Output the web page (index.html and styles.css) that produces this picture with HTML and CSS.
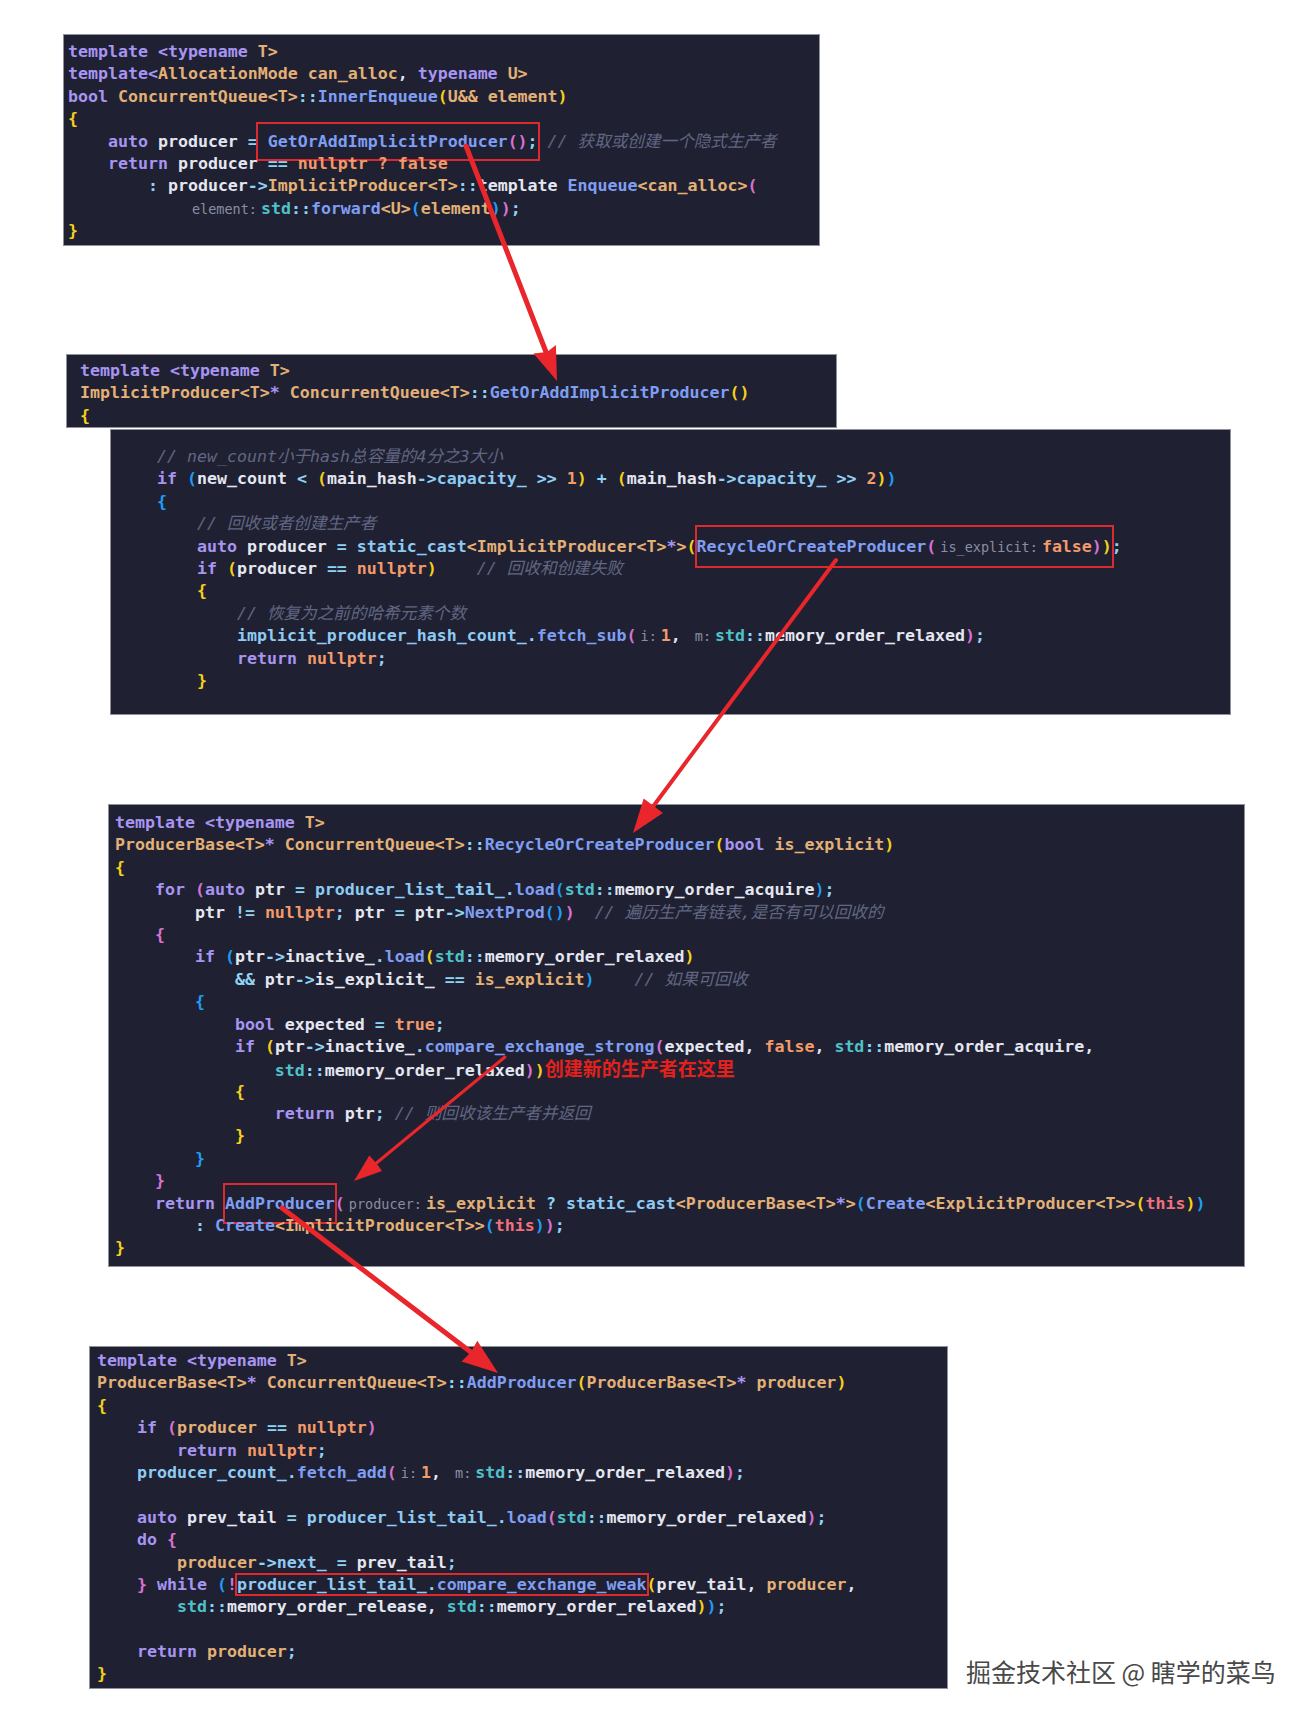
FILE: index.html
```html
<!DOCTYPE html>
<html lang="zh-CN">
<head>
<meta charset="utf-8">
<title>ConcurrentQueue</title>
<link rel="stylesheet" href="styles.css">
</head>
<body>
<div class="page">
  <div class="code b1">
<div class="l"><span class="k">template &lt;typename</span> <span class="t">T&gt;</span></div>
<div class="l"><span class="k">template&lt;</span><span class="t">AllocationMode can_alloc</span>, <span class="k">typename</span> <span class="t">U&gt;</span></div>
<div class="l"><span class="k">bool</span> <span class="t">ConcurrentQueue&lt;T&gt;</span><span class="o">::</span><span class="f">InnerEnqueue</span><span class="y">(</span><span class="t">U&amp;&amp; element</span><span class="y">)</span></div>
<div class="l"><span class="y">{</span></div>
<div class="l">    <span class="k">auto</span> producer <span class="o">=</span><span class="box bx1"> <span class="f">GetOrAddImplicitProducer</span><span class="p">()</span><span class="o">;</span></span> <span class="c">// 获取或创建一个隐式生产者</span></div>
<div class="l">    <span class="k">return</span> producer <span class="o">==</span> <span class="n">nullptr ? false</span></div>
<div class="l">        <span class="o">:</span> producer<span class="o">-&gt;</span><span class="t">ImplicitProducer&lt;T&gt;</span><span class="o">::</span>template <span class="f">Enqueue</span><span class="t">&lt;can_alloc&gt;</span><span class="p">(</span></div>
<div class="l">            <span class="h">element:</span><span class="s">std</span><span class="o">::</span><span class="f">forward</span><span class="t">&lt;U&gt;</span><span class="bl">(</span><span class="t">element</span><span class="bl">)</span><span class="p">)</span><span class="o">;</span></div>
<div class="l"><span class="y">}</span></div>
  </div>

  <div class="code b2">
<div class="l"><span class="k">template &lt;typename</span> <span class="t">T&gt;</span></div>
<div class="l"><span class="t">ImplicitProducer&lt;T&gt;</span><span class="k">*</span> <span class="t">ConcurrentQueue&lt;T&gt;</span><span class="o">::</span><span class="f">GetOrAddImplicitProducer</span><span class="y">()</span></div>
<div class="l"><span class="y">{</span></div>
  </div>

  <div class="code b3">
<div class="l"><span class="c">// new_count小于hash总容量的4分之3大小</span></div>
<div class="l"><span class="k">if</span> <span class="bl">(</span>new_count <span class="o">&lt;</span> <span class="y">(</span>main_hash<span class="o">-&gt;</span><span class="m">capacity_</span> <span class="o">&gt;&gt;</span> <span class="n">1</span><span class="y">)</span> <span class="o">+</span> <span class="y">(</span>main_hash<span class="o">-&gt;</span><span class="m">capacity_</span> <span class="o">&gt;&gt;</span> <span class="n">2</span><span class="y">)</span><span class="bl">)</span></div>
<div class="l"><span class="bl">{</span></div>
<div class="l">    <span class="c">// 回收或者创建生产者</span></div>
<div class="l">    <span class="k">auto</span> producer <span class="o">=</span> <span class="m">static_cast</span><span class="t">&lt;ImplicitProducer&lt;T&gt;</span><span class="k">*</span><span class="t">&gt;</span><span class="y">(</span><span class="box bx3"><span class="f">RecycleOrCreateProducer</span><span class="p">(</span><span class="h">is_explicit:</span><span class="n">false</span><span class="p">)</span><span class="y">)</span></span><span class="o">;</span></div>
<div class="l">    <span class="k">if</span> <span class="y">(</span>producer <span class="o">==</span> <span class="n">nullptr</span><span class="y">)</span>    <span class="c">// 回收和创建失败</span></div>
<div class="l">    <span class="y">{</span></div>
<div class="l">        <span class="c">// 恢复为之前的哈希元素个数</span></div>
<div class="l">        <span class="m">implicit_producer_hash_count_</span><span class="o">.</span><span class="f">fetch_sub</span><span class="p">(</span><span class="h">i:</span><span class="n">1</span>, <span class="h">m:</span><span class="s">std</span><span class="o">::</span>memory_order_relaxed<span class="p">)</span><span class="o">;</span></div>
<div class="l">        <span class="k">return</span> <span class="n">nullptr</span><span class="o">;</span></div>
<div class="l">    <span class="y">}</span></div>
  </div>

  <div class="code b4">
<div class="l"><span class="k">template &lt;typename</span> <span class="t">T&gt;</span></div>
<div class="l"><span class="t">ProducerBase&lt;T&gt;</span><span class="k">*</span> <span class="t">ConcurrentQueue&lt;T&gt;</span><span class="o">::</span><span class="f">RecycleOrCreateProducer</span><span class="y">(</span><span class="k">bool</span> <span class="t">is_explicit</span><span class="y">)</span></div>
<div class="l"><span class="y">{</span></div>
<div class="l">    <span class="k">for</span> <span class="p">(</span><span class="k">auto</span> ptr <span class="o">=</span> <span class="m">producer_list_tail_</span><span class="o">.</span><span class="f">load</span><span class="bl">(</span><span class="s">std</span><span class="o">::</span>memory_order_acquire<span class="bl">)</span><span class="o">;</span></div>
<div class="l">        ptr <span class="o">!=</span> <span class="n">nullptr</span><span class="o">;</span> ptr <span class="o">=</span> ptr<span class="o">-&gt;</span><span class="f">NextProd</span><span class="bl">()</span><span class="p">)</span>  <span class="c">// 遍历生产者链表,是否有可以回收的</span></div>
<div class="l">    <span class="p">{</span></div>
<div class="l">        <span class="k">if</span> <span class="bl">(</span>ptr<span class="o">-&gt;</span>inactive_<span class="o">.</span><span class="f">load</span><span class="y">(</span><span class="s">std</span><span class="o">::</span>memory_order_relaxed<span class="y">)</span></div>
<div class="l">            <span class="o">&amp;&amp;</span> ptr<span class="o">-&gt;</span>is_explicit_ <span class="o">==</span> <span class="t">is_explicit</span><span class="bl">)</span>    <span class="c">// 如果可回收</span></div>
<div class="l">        <span class="bl">{</span></div>
<div class="l">            <span class="k">bool</span> expected <span class="o">=</span> <span class="n">true</span><span class="o">;</span></div>
<div class="l">            <span class="k">if</span> <span class="y">(</span>ptr<span class="o">-&gt;</span>inactive_<span class="o">.</span><span class="f">compare_exchange_strong</span><span class="p">(</span>expected, <span class="n">false</span>, <span class="s">std</span><span class="o">::</span>memory_order_acquire,</div>
<div class="l">                <span class="s">std</span><span class="o">::</span>memory_order_relaxed<span class="p">)</span><span class="y">)</span><span class="ann">创建新的生产者在这里</span></div>
<div class="l">            <span class="y">{</span></div>
<div class="l">                <span class="k">return</span> ptr<span class="o">;</span> <span class="c">// 则回收该生产者并返回</span></div>
<div class="l">            <span class="y">}</span></div>
<div class="l">        <span class="bl">}</span></div>
<div class="l">    <span class="p">}</span></div>
<div class="l">    <span class="k">return</span> <span class="box bx4"><span class="f">AddProducer</span></span><span class="p">(</span><span class="h">producer:</span><span class="t">is_explicit</span> <span class="o">?</span> <span class="m">static_cast</span><span class="t">&lt;ProducerBase&lt;T&gt;</span><span class="k">*</span><span class="t">&gt;</span><span class="bl">(</span><span class="f">Create</span><span class="t">&lt;ExplicitProducer&lt;T&gt;&gt;</span><span class="y">(</span><span class="th">this</span><span class="y">)</span><span class="bl">)</span></div>
<div class="l">        <span class="o">:</span> <span class="f">Create</span><span class="t">&lt;ImplicitProducer&lt;T&gt;&gt;</span><span class="bl">(</span><span class="th">this</span><span class="bl">)</span><span class="p">)</span><span class="o">;</span></div>
<div class="l"><span class="y">}</span></div>
  </div>

  <div class="row5">
    <div class="code b5">
<div class="l"><span class="k">template &lt;typename</span> <span class="t">T&gt;</span></div>
<div class="l"><span class="t">ProducerBase&lt;T&gt;</span><span class="k">*</span> <span class="t">ConcurrentQueue&lt;T&gt;</span><span class="o">::</span><span class="f">AddProducer</span><span class="y">(</span><span class="t">ProducerBase&lt;T&gt;</span><span class="k">*</span> <span class="t">producer</span><span class="y">)</span></div>
<div class="l"><span class="y">{</span></div>
<div class="l">    <span class="k">if</span> <span class="p">(</span><span class="t">producer</span> <span class="o">==</span> <span class="n">nullptr</span><span class="p">)</span></div>
<div class="l">        <span class="k">return</span> <span class="n">nullptr</span><span class="o">;</span></div>
<div class="l">    <span class="m">producer_count_</span><span class="o">.</span><span class="f">fetch_add</span><span class="p">(</span><span class="h">i:</span><span class="n">1</span>, <span class="h">m:</span><span class="s">std</span><span class="o">::</span>memory_order_relaxed<span class="p">)</span><span class="o">;</span></div>
<div class="l"></div>
<div class="l">    <span class="k">auto</span> prev_tail <span class="o">=</span> <span class="m">producer_list_tail_</span><span class="o">.</span><span class="f">load</span><span class="p">(</span><span class="s">std</span><span class="o">::</span>memory_order_relaxed<span class="p">)</span><span class="o">;</span></div>
<div class="l">    <span class="k">do</span> <span class="p">{</span></div>
<div class="l">        <span class="t">producer</span><span class="o">-&gt;</span><span class="m">next_</span> <span class="o">=</span> prev_tail<span class="o">;</span></div>
<div class="l">    <span class="p">}</span> <span class="k">while</span> <span class="bl">(</span><span class="p">!</span><span class="box bx5"><span class="m">producer_list_tail_</span><span class="o">.</span><span class="f">compare_exchange_weak</span></span><span class="y">(</span>prev_tail, <span class="t">producer</span>,</div>
<div class="l">        <span class="s">std</span><span class="o">::</span>memory_order_release, <span class="s">std</span><span class="o">::</span>memory_order_relaxed<span class="y">)</span><span class="bl">)</span><span class="o">;</span></div>
<div class="l"></div>
<div class="l">    <span class="k">return</span> <span class="t">producer</span><span class="o">;</span></div>
<div class="l"><span class="y">}</span></div>
    </div>
    <div class="wm">掘金技术社区 @ 瞎学的菜鸟</div>
  </div>

  <svg class="arrows" width="1314" height="1723" viewBox="0 0 1314 1723" aria-hidden="true">
    <g stroke="#e8262b" stroke-linecap="round" fill="none">
      <line x1="466" y1="146" x2="546" y2="352" stroke-width="5"/>
      <line x1="836" y1="560" x2="652" y2="808" stroke-width="4"/>
      <line x1="505" y1="1057" x2="374" y2="1165" stroke-width="3"/>
      <line x1="282" y1="1208" x2="472" y2="1353" stroke-width="5"/>
    </g>
    <g fill="#e8262b">
      <polygon points="557,381 533.5,353.6 547,352 555.9,345"/>
      <polygon points="633,833 643.7,798.5 655,807 662.9,812.9"/>
      <polygon points="354,1181 369.3,1155.5 377,1164 382,1170.9"/>
      <polygon points="498,1373 461.5,1361.4 471,1352 477.3,1340.8"/>
    </g>
  </svg>
</div>
</body>
</html>
```

FILE: styles.css
```css
* {
  box-sizing: border-box;
}

html,
body {
  margin: 0;
  padding: 0;
  background: #ffffff;
}

.page {
  position: relative;
  width: 1314px;
  height: 1723px;
  padding-top: 34px;
  overflow: hidden;
}

.code {
  background: #1f2132;
  border: 1px solid #8f919c;
  font-family: "DejaVu Sans Mono", "Noto Sans CJK SC", monospace;
  font-size: 16.6px;
  font-weight: bold;
  color: #e4e6f0;
}

.l {
  height: 22.4px;
  line-height: 22.4px;
  white-space: pre;
}

.b1 {
  margin-left: 63px;
  width: 757px;
  height: 212px;
  padding: 6px 0 0 4px;
}

.b2 {
  margin-top: 108px;
  margin-left: 66px;
  width: 771px;
  height: 74px;
  padding: 5px 0 0 13px;
}

.b3 {
  margin-top: 1px;
  margin-left: 110px;
  width: 1121px;
  height: 286px;
  padding: 16px 0 0 46px;
}

.b4 {
  margin-top: 89px;
  margin-left: 108px;
  width: 1137px;
  height: 463px;
  padding: 7px 0 0 6px;
}

.row5 {
  display: flex;
  align-items: flex-end;
  margin-top: 79px;
}

.b5 {
  flex: none;
  margin-left: 89px;
  width: 859px;
  height: 343px;
  padding: 3px 0 0 7px;
}

.wm {
  margin-left: 18px;
  margin-bottom: 5px;
  font-family: "Noto Sans CJK SC", sans-serif;
  font-size: 25px;
  line-height: 1;
  color: #484848;
  white-space: nowrap;
  text-shadow: 0 0 1px #ffffff;
}

/* syntax colours */
.k { color: #a895f2; }
.t { color: #e3b076; }
.f { color: #7f9ef3; }
.o { color: #8fd3f5; }
.m { color: #8ecbf3; }
.s { color: #4fc2c9; }
.n { color: #f39a6b; }
.th { color: #f0717d; }
.y { color: #f5d01a; }
.p { color: #d772d4; }
.bl { color: #1f9cf5; }

.c {
  color: #616682;
  font-style: italic;
  font-weight: normal;
}

.h {
  color: #8a8ea3;
  font-size: 13.5px;
  font-weight: normal;
  line-height: 1;
  padding: 0 4px;
}

.box {
  border: 2px solid #dc2a2e;
  margin: 0 -2px;
}

.bx1 { padding: 8px 0; }
.bx3 { padding: 10px 0; }
.bx4 { padding: 9px 0; }
.bx5 { padding: 0; }

.ann {
  color: #e3211c;
  font-family: "Noto Sans CJK SC", sans-serif;
  font-size: 19px;
  font-weight: bold;
  line-height: 1;
}

.arrows {
  position: absolute;
  top: 0;
  left: 0;
  pointer-events: none;
}
```
